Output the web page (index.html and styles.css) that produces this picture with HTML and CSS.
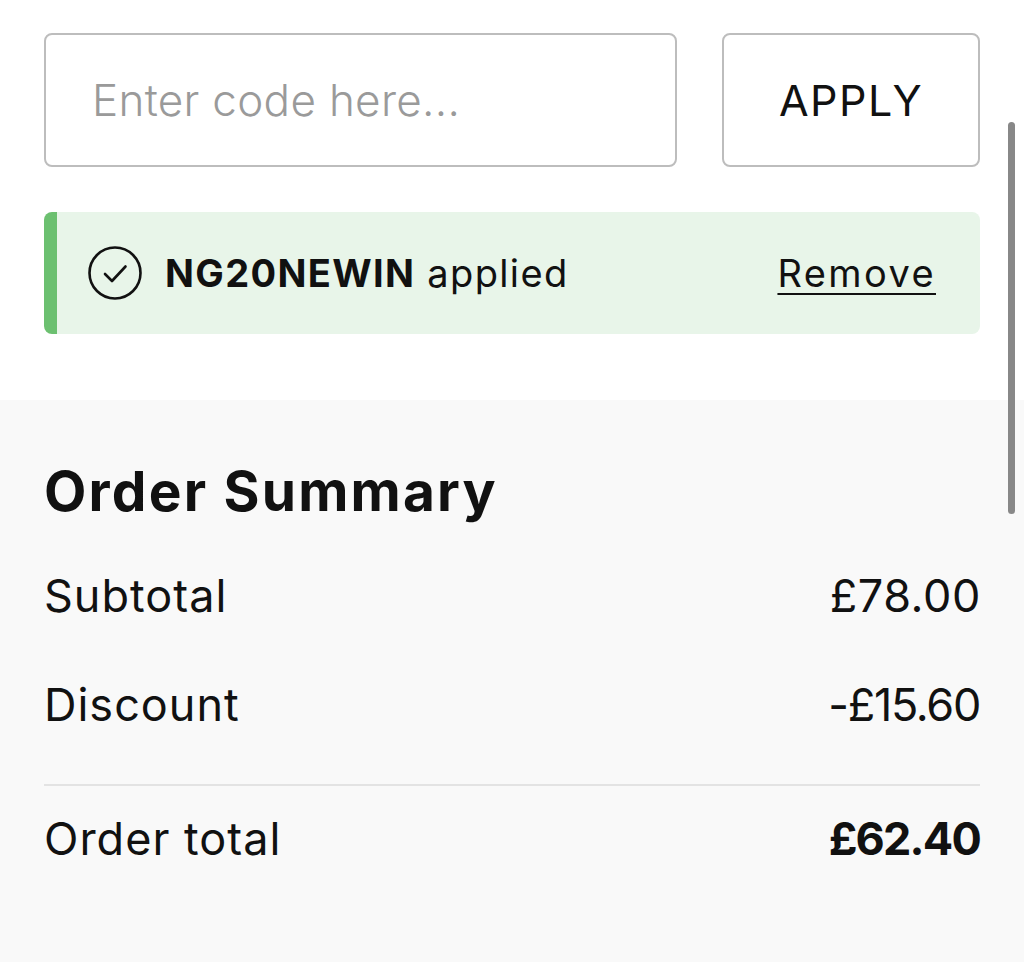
FILE: index.html
```html
<!DOCTYPE html>
<html lang="en">
<head>
<meta charset="utf-8">
<title>Order Summary</title>
<link rel="stylesheet" href="styles.css">
</head>
<body>
<div class="page">
  <section class="promo">
    <div class="code-row">
      <input class="code-input" type="text" placeholder="Enter code here...">
      <button class="apply-btn" type="button">APPLY</button>
    </div>
    <div class="applied">
      <span class="check">
        <svg viewBox="0 0 54 54" width="54" height="54" aria-hidden="true">
          <circle cx="27" cy="27" r="25.5" fill="none" stroke="#111" stroke-width="2.6"/>
          <path d="M17 28 L24 35 L37.5 20.5" fill="none" stroke="#111" stroke-width="2.6" stroke-linecap="round" stroke-linejoin="round"/>
        </svg>
      </span>
      <span class="applied-text"><b>NG20NEWIN</b> applied</span>
      <a class="remove" href="#">Remove</a>
    </div>
  </section>
  <section class="summary">
    <h2 class="summary-title">Order Summary</h2>
    <div class="line">
      <span class="label">Subtotal</span>
      <span class="value">£78.00</span>
    </div>
    <div class="line discount">
      <span class="label">Discount</span>
      <span class="value neg">-£15.60</span>
    </div>
    <div class="line total">
      <span class="label">Order total</span>
      <span class="value total-value">£62.40</span>
    </div>
  </section>
  <div class="scrollbar"></div>
</div>
</body>
</html>
```
FILE: styles.css
```css
html, body {
  margin: 0;
  padding: 0;
  background: #ffffff;
}
body {
  font-family: Inter, "DejaVu Sans", sans-serif;
  color: #111111;
}
.page {
  position: relative;
  min-height: 962px;
  display: flex;
  flex-direction: column;
}
.promo {
  padding: 33px 44px 66px 44px;
  display: flex;
  flex-direction: column;
  gap: 45px;
}
.code-row {
  display: flex;
  gap: 45px;
  height: 134px;
}
.code-input {
  flex: 0 0 633px;
  width: 633px;
  min-width: 0;
  box-sizing: border-box;
  height: 134px;
  border: 2px solid #bdbdbd;
  border-radius: 8px;
  padding: 0 0 0 46px;
  font-family: inherit;
  font-size: 44px;
  font-weight: 300;
  letter-spacing: 0.3px;
  color: #111;
  background: #fff;
  outline: none;
}
.code-input::placeholder {
  color: #9a9a9a;
}
.apply-btn {
  flex: 0 0 258px;
  width: 258px;
  min-width: 0;
  box-sizing: border-box;
  height: 134px;
  border: 2px solid #bdbdbd;
  border-radius: 8px;
  background: #fff;
  font-family: inherit;
  font-size: 43px;
  font-weight: 400;
  color: #111;
  padding: 0;
  letter-spacing: 1.5px;
}
.applied {
  box-sizing: border-box;
  height: 122px;
  background: #e8f5e9;
  border-left: 13px solid #6cc070;
  border-radius: 8px;
  display: flex;
  align-items: center;
  padding: 0 44px 0 31px;
  font-size: 38px;
  line-height: 1;
}
.check {
  display: flex;
  width: 54px;
  height: 54px;
  margin-right: 23px;
}
.applied-text {
  flex: 1;
  color: #111;
  letter-spacing: 1.35px;
}
.applied-text b {
  font-weight: 700;
}
.remove {
  color: #111;
  letter-spacing: 2.4px;
  text-decoration: underline;
  text-underline-offset: 6px;
  text-decoration-thickness: 2px;
}
.summary {
  flex: 1;
  background: #f9f9f9;
  padding: 64px 44px 0 44px;
}
.summary-title {
  margin: 0 0 54px 0;
  font-size: 55px;
  line-height: 55px;
  font-weight: 700;
  letter-spacing: 2.2px;
}
.line {
  display: flex;
  justify-content: space-between;
  font-size: 45px;
  line-height: 45px;
}
.label {
  letter-spacing: 1px;
}
.value {
  letter-spacing: 0.6px;
  margin-right: -1px;
}
.value.neg {
  letter-spacing: -1.3px;
  margin-right: 0;
}
.line.discount {
  margin-top: 64px;
  padding-bottom: 57px;
  border-bottom: 2px solid #e3e3e3;
}
.line.total {
  margin-top: 30px;
}
.value.total-value {
  font-weight: 700;
  letter-spacing: -1.8px;
  margin-right: 0;
}
.scrollbar {
  position: absolute;
  left: 1008px;
  top: 122px;
  width: 7px;
  height: 392px;
  border-radius: 4px;
  background: #888888;
}
```
